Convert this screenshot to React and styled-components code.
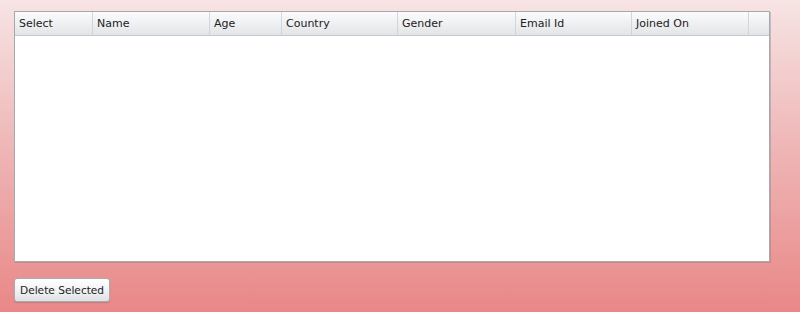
import React from 'react'
import styled, { createGlobalStyle } from 'styled-components'

const GlobalStyle = createGlobalStyle`
  html, body {
    margin: 0;
    padding: 0;
  }
  body {
    width: 800px;
    height: 312px;
    overflow: hidden;
    background: linear-gradient(to bottom, #f7e4e4 0%, #efb8b8 45%, #e98787 100%);
    font-family: Tahoma, "DejaVu Sans", Verdana, sans-serif;
  }
`

const Page = styled.div`
  display: flex;
  flex-direction: column;
  padding: 11px 30px 0 14px;
  gap: 16px;
`

const Grid = styled.div`
  height: 251px;
  box-sizing: border-box;
  border: 1px solid #a3a9b1;
  background: #fff;
  display: flex;
  flex-direction: column;
  box-shadow: 1px 1px 0 rgba(120, 120, 130, 0.35);
`

const HeaderRow = styled.div`
  display: flex;
  height: 24px;
  box-sizing: border-box;
  border-bottom: 1px solid #c6cacf;
  background: linear-gradient(to bottom, #fbfbfc 0%, #eef0f1 50%, #e2e5e7 100%);
`

const HeaderCell = styled.div`
  width: ${(p) => p.$w}px;
  flex: none;
  box-sizing: border-box;
  border-right: 1px solid #d2d5d9;
  padding-left: 4px;
  display: flex;
  align-items: center;
  font-size: 11px;
  color: #222;
  &:last-child {
    border-right: none;
    flex: 1;
  }
`

const Body = styled.div`
  flex: 1;
`

const Button = styled.button`
  align-self: flex-start;
  height: 24px;
  padding: 0 5px;
  font-family: inherit;
  font-size: 10.6px;
  color: #222;
  border: 1px solid #a7adb3;
  border-radius: 3px;
  background: linear-gradient(to bottom, #ffffff 0%, #f2f3f4 50%, #dfe2e4 100%);
  box-shadow: 0 1px 1px rgba(80, 80, 80, 0.25);
`

const columns = [
  { name: 'Select', w: 78 },
  { name: 'Name', w: 117 },
  { name: 'Age', w: 72 },
  { name: 'Country', w: 116 },
  { name: 'Gender', w: 118 },
  { name: 'Email Id', w: 116 },
  { name: 'Joined On', w: 117 },
  { name: '', w: 21 }
]

export default function App() {
  return (
    <>
      <GlobalStyle />
      <Page>
        <Grid>
          <HeaderRow>
            {columns.map((c, i) => (
              <HeaderCell key={i} $w={c.w}>{c.name}</HeaderCell>
            ))}
          </HeaderRow>
          <Body />
        </Grid>
        <Button>Delete Selected</Button>
      </Page>
    </>
  )
}
